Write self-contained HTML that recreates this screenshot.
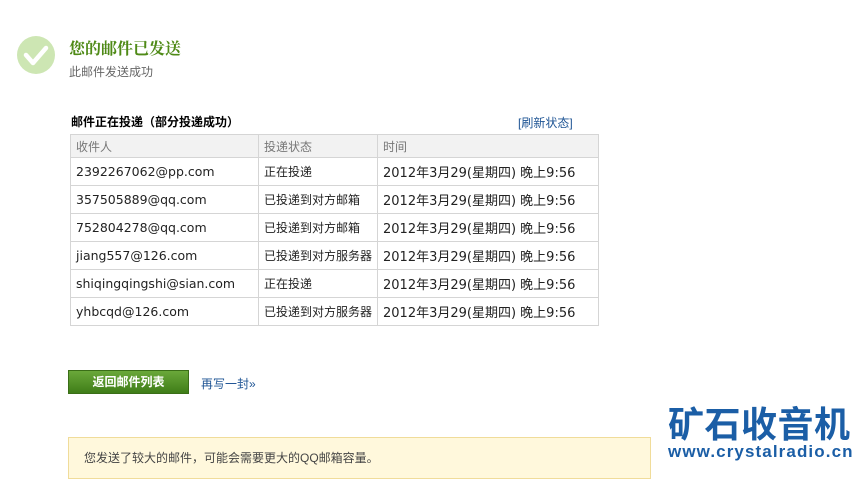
<!DOCTYPE html>
<html><head><meta charset="utf-8"><style>
body{margin:0;width:862px;height:463px;overflow:hidden;background:#fff;font-family:"Liberation Sans","Noto Sans CJK SC",sans-serif;position:relative}
.a{position:absolute}
table{border-collapse:collapse;position:absolute;left:70px;top:134px;width:529px;font-size:12.5px;font-family:"DejaVu Sans","Noto Sans CJK SC",sans-serif}
td{border:1px solid #d5d5d5;height:27px;padding:0 0 0 5px;color:#222;white-space:nowrap}
td.d{font-size:13px}
tr.h td{background:#f2f2f2;color:#777;font-size:12px;height:22px;font-family:"Liberation Sans","Noto Sans CJK SC",sans-serif}
td.s{font-size:12px;font-family:"Liberation Sans","Noto Sans CJK SC",sans-serif}
</style></head><body>
<svg class="a" style="left:17px;top:36px" width="38" height="38"><circle cx="19" cy="19" r="19" fill="#cde6b3"/><path d="M9 19 L16 27 L29 12" stroke="#fff" stroke-width="4.5" fill="none" stroke-linecap="round" stroke-linejoin="round"/></svg>
<div class="a" style="left:69px;top:36px;font-size:16px;font-weight:bold;color:#4f8a17;font-family:'Noto Serif CJK SC',serif">您的邮件已发送</div>
<div class="a" style="left:69px;top:63px;font-size:12px;color:#666">此邮件发送成功</div>
<div class="a" style="left:71px;top:113px;font-size:12px;font-weight:bold;color:#000">邮件正在投递（部分投递成功）</div>
<div class="a" style="left:518px;top:114px;font-size:12px;color:#1e5494">[刷新状态]</div>
<table>
<tr class="h"><td style="width:182px">收件人</td><td style="width:113px">投递状态</td><td>时间</td></tr>
<tr><td>2392267062@pp.com</td><td class="s">正在投递</td><td class="d">2012年3月29(星期四) 晚上9:56</td></tr>
<tr><td>357505889@qq.com</td><td class="s">已投递到对方邮箱</td><td class="d">2012年3月29(星期四) 晚上9:56</td></tr>
<tr><td>752804278@qq.com</td><td class="s">已投递到对方邮箱</td><td class="d">2012年3月29(星期四) 晚上9:56</td></tr>
<tr><td>jiang557@126.com</td><td class="s">已投递到对方服务器</td><td class="d">2012年3月29(星期四) 晚上9:56</td></tr>
<tr><td>shiqingqingshi@sian.com</td><td class="s">正在投递</td><td class="d">2012年3月29(星期四) 晚上9:56</td></tr>
<tr><td>yhbcqd@126.com</td><td class="s">已投递到对方服务器</td><td class="d">2012年3月29(星期四) 晚上9:56</td></tr>
</table>
<div class="a" style="left:68px;top:370px;width:119px;height:22px;background:linear-gradient(#6aa83a,#3f7d18);border:1px solid #3a6e17;color:#fff;font-size:12px;font-weight:bold;text-align:center;line-height:22px">返回邮件列表</div>
<div class="a" style="left:201px;top:375px;font-size:12px;color:#1e5494">再写一封»</div>
<div class="a" style="left:68px;top:437px;width:581px;height:40px;background:#fff8dc;border:1px solid #f0dc9a"></div>
<div class="a" style="left:84px;top:449px;font-size:12px;color:#444">您发送了较大的邮件，可能会需要更大的QQ邮箱容量。</div>
<div class="a" style="left:668px;top:396px;font-size:36px;font-weight:bold;color:#1b5ea6;letter-spacing:0.5px">矿石收音机</div>
<div class="a" style="left:668px;top:442px;font-size:17px;font-weight:bold;color:#1b5ea6;letter-spacing:1.1px">www.crystalradio.cn</div>
</body></html>
